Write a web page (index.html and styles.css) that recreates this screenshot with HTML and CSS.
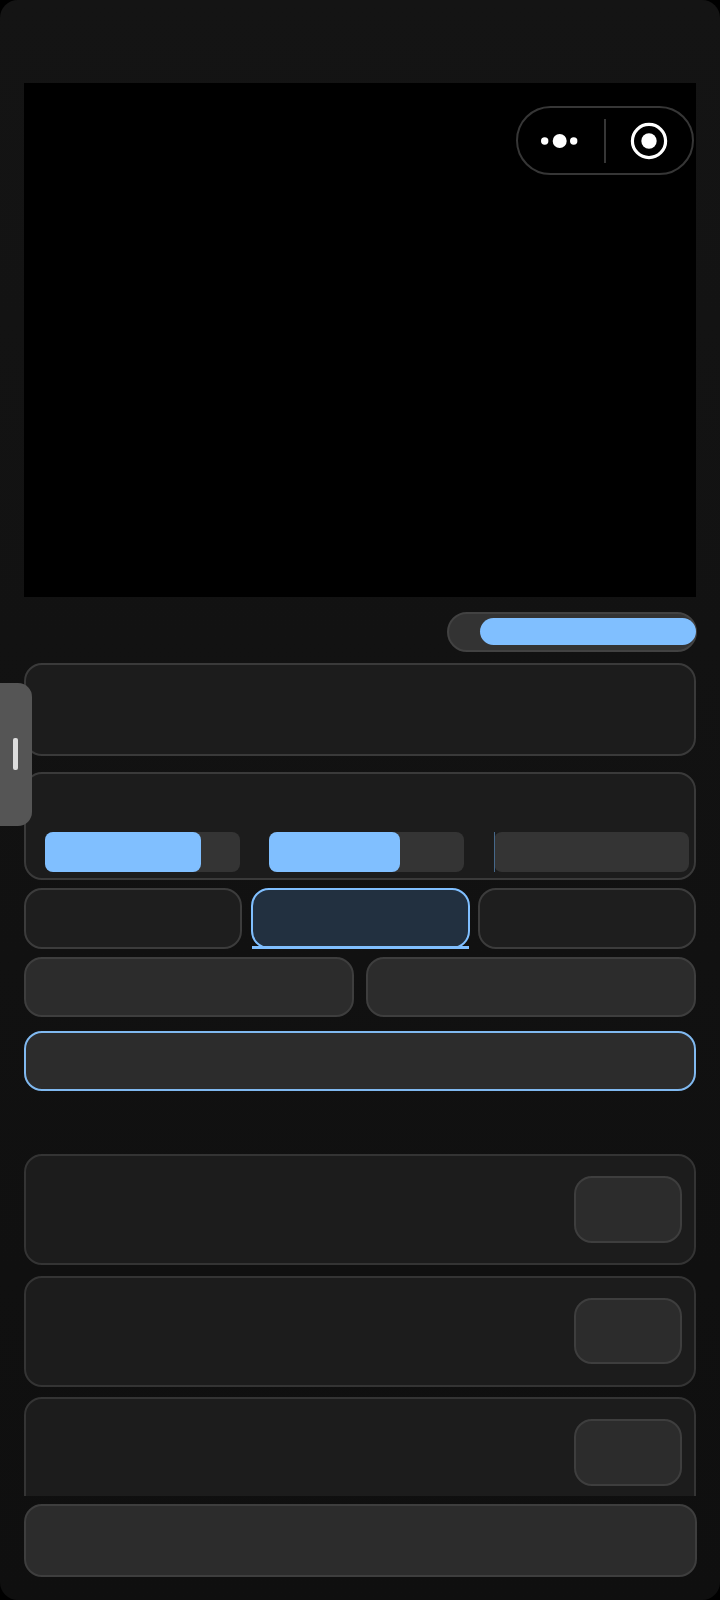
FILE: index.html
```html
<!DOCTYPE html>
<html lang="en">
<head>
    <meta charset="UTF-8">
    <title>Player</title>
    <link rel="stylesheet" href="styles.css">
</head>
<body>
    <div class="app">
        <div class="video">
            <div class="capsule">
                <div class="capsule-dots">
                    <svg width="40" height="16" viewBox="0 0 40 16">
                        <circle cx="4.7" cy="8" r="3.7" fill="#fff"/>
                        <circle cx="19.7" cy="8" r="7" fill="#fff"/>
                        <circle cx="33.7" cy="8" r="3.7" fill="#fff"/>
                    </svg>
                </div>
                <div class="capsule-line"></div>
                <div class="capsule-target">
                    <svg width="38" height="38" viewBox="0 0 38 38">
                        <circle cx="19" cy="19" r="16.6" fill="none" stroke="#fff" stroke-width="3.2"/>
                        <circle cx="19" cy="19" r="7.7" fill="#fff"/>
                    </svg>
                </div>
            </div>
        </div>

        <div class="mode-row">
            <div class="mode-track">
                <div class="mode-thumb"></div>
            </div>
        </div>

        <div class="panel panel-top"></div>

        <div class="panel panel-sliders">
            <div class="slider"><div class="slider-fill fill-1"></div></div>
            <div class="slider"><div class="slider-fill fill-2"></div></div>
            <div class="slider"><div class="slider-fill fill-3"></div></div>
        </div>

        <div class="tabs">
            <div class="tab"></div>
            <div class="tab tab-active"></div>
            <div class="tab"></div>
        </div>

        <div class="actions">
            <div class="action"></div>
            <div class="action"></div>
        </div>

        <div class="action action-wide"></div>

        <div class="list">
            <div class="list-item"><div class="list-btn"></div></div>
            <div class="list-item"><div class="list-btn"></div></div>
            <div class="list-item"><div class="list-btn"></div></div>
        </div>

        <div class="action footer-btn"></div>

        <div class="side-handle"><div class="side-grip"></div></div>
    </div>
</body>
</html>
```

FILE: styles.css
```css
html, body {
    margin: 0;
    padding: 0;
    background-color: #000;
}
* {
    box-sizing: border-box;
}
.app {
    position: relative;
    width: 720px;
    height: 1600px;
    padding: 83px 24px 0 24px;
    border-radius: 18px;
    background: linear-gradient(#141414, #111 60%, #0f0f0f);
    overflow: hidden;
}
.video {
    position: relative;
    height: 514px;
    background-color: #000;
}
.capsule {
    position: absolute;
    top: 23px;
    right: 2.5px;
    width: 177.5px;
    height: 69px;
    display: flex;
    align-items: center;
    border: 2px solid #363636;
    border-radius: 35px;
}
.capsule-dots {
    width: 86px;
    padding-left: 22px;
    display: flex;
}
.capsule-line {
    width: 2px;
    height: 44px;
    background-color: #363636;
}
.capsule-target {
    flex: 1;
    display: flex;
    justify-content: center;
    padding-left: 1px;
}
.mode-row {
    display: flex;
    justify-content: flex-end;
    margin: 15px -0.5px 0 0;
}
.mode-track {
    width: 250px;
    height: 40px;
    display: flex;
    justify-content: flex-end;
    padding-top: 4px;
    background-color: #333;
    border: 2px solid #424242;
    border-radius: 20px;
}
.mode-thumb {
    width: 216px;
    height: 27px;
    margin-right: -1.5px;
    background-color: #80bfff;
    border-radius: 13.5px;
}
.panel {
    background-color: #1c1c1c;
    border: 2px solid #3a3a3a;
    border-radius: 18px;
}
.panel-top {
    height: 93px;
    margin-top: 11px;
}
.panel-sliders {
    height: 108px;
    margin-top: 16px;
    padding: 0 5px 6px 19px;
    display: grid;
    grid-template-columns: repeat(3, 195px);
    column-gap: 29.25px;
    align-items: end;
}
.slider {
    height: 40px;
    background-color: #343434;
    border-radius: 8px;
}
.slider-fill {
    height: 100%;
    background-color: #80bfff;
    border-radius: 8px;
}
.fill-1 {
    width: 155.5px;
}
.fill-2 {
    width: 130.5px;
}
.fill-3 {
    width: 1px;
    border-radius: 0;
    background-color: #46688a;
}
.tabs {
    display: grid;
    grid-template-columns: repeat(3, 1fr);
    column-gap: 9px;
    height: 60.5px;
    margin-top: 8px;
}
.tab {
    position: relative;
    background-color: #1e1e1e;
    border: 2px solid #3c3c3c;
    border-radius: 18px;
}
.tab-active {
    margin-right: -1px;
    background-color: #223040;
    border-color: #80bfff;
}
.tab-active::after {
    content: "";
    position: absolute;
    left: -1px;
    right: -1px;
    bottom: -2px;
    height: 3px;
    background-color: #80bfff;
}
.actions {
    display: grid;
    grid-template-columns: 1fr 1fr;
    column-gap: 11.5px;
    height: 60px;
    margin-top: 8px;
}
.action {
    background-color: #2c2c2c;
    border: 2px solid #3e3e3e;
    border-radius: 18px;
}
.action-wide {
    height: 60.5px;
    margin-top: 14px;
    border-color: #80b9f0;
}
.list {
    height: 342px;
    margin-top: 63px;
    display: flex;
    flex-direction: column;
    gap: 10.5px;
    overflow: hidden;
}
.list-item {
    flex: none;
    height: 111px;
    display: flex;
    justify-content: flex-end;
    align-items: center;
    padding-right: 12px;
    background-color: #1c1c1c;
    border: 2px solid #343434;
    border-radius: 18px;
}
.list-item:last-child {
    border-bottom-left-radius: 0;
    border-bottom-right-radius: 0;
}
.list-btn {
    width: 108px;
    height: 66.5px;
    background-color: #2c2c2c;
    border: 2px solid #3e3e3e;
    border-radius: 18px;
}
.footer-btn {
    height: 72.5px;
    margin-top: 8px;
    margin-right: -0.5px;
}
.side-handle {
    position: absolute;
    left: 0;
    top: 683px;
    width: 31.5px;
    height: 142.5px;
    display: flex;
    justify-content: center;
    align-items: center;
    background-color: #555;
    border-radius: 0 14px 14px 0;
}
.side-grip {
    width: 5px;
    height: 32px;
    background-color: #ddd;
    border-radius: 2px;
}
```
